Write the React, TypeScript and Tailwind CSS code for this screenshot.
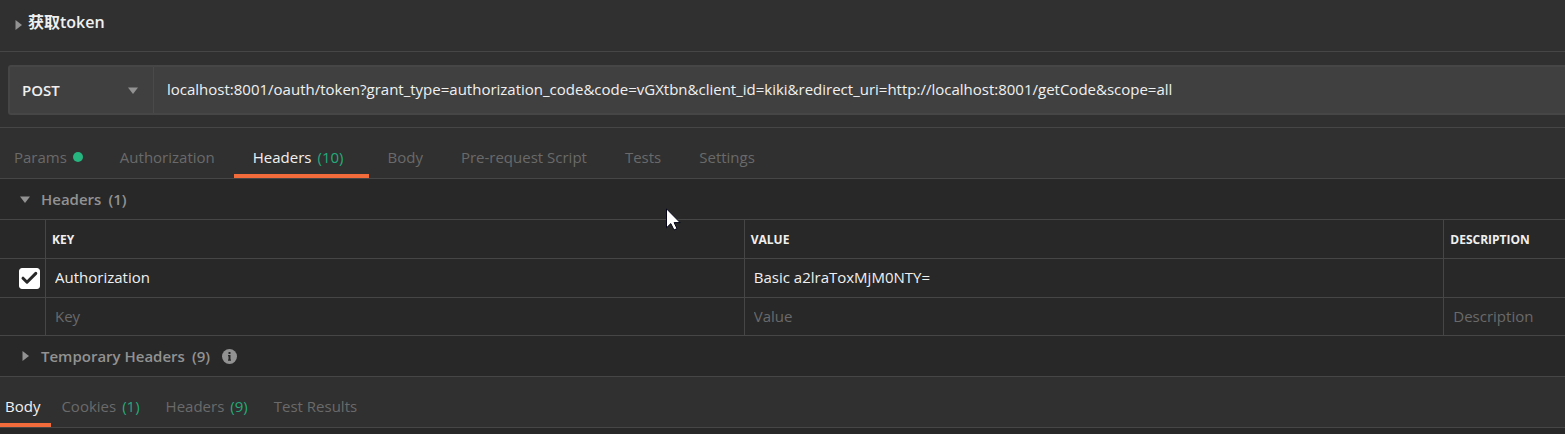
import React from "react";

type Tab = { label: string; count?: number; dot?: boolean };

const requestTabs: Tab[] = [
  { label: "Params", dot: true },
  { label: "Authorization" },
  { label: "Headers", count: 10 },
  { label: "Body" },
  { label: "Pre-request Script" },
  { label: "Tests" },
  { label: "Settings" },
];

const responseTabs: Tab[] = [
  { label: "Body" },
  { label: "Cookies", count: 1 },
  { label: "Headers", count: 9 },
  { label: "Test Results" },
];

function TriangleRight() {
  return (
    <svg className="h-[10px] w-[7px] shrink-0" viewBox="0 0 7 10" fill="#929292" aria-hidden="true">
      <path d="M0.5 0v10L7 5z" />
    </svg>
  );
}

function TriangleDown() {
  return (
    <svg className="h-[7px] w-[10px] shrink-0" viewBox="0 0 10 7" fill="#929292" aria-hidden="true">
      <path d="M0 0.5h10L5 7z" />
    </svg>
  );
}

function TabBar({
  tabs,
  initial,
  name,
  tabClass,
}: {
  tabs: Tab[];
  initial: number;
  name: string;
  tabClass: string;
}) {
  const [active, setActive] = React.useState(initial);
  return (
    <div role="tablist" aria-label={name} className="flex h-[51px] border-b border-[#464646] bg-[#303030]">
      {tabs.map((tab, i) => (
        <button
          key={tab.label}
          type="button"
          role="tab"
          aria-selected={i === active}
          onClick={() => setActive(i)}
          className={`flex items-center border-b-4 pt-3 whitespace-nowrap ${tabClass} ${
            i === active ? "border-[#f26b3a] text-[#f0f0f0]" : "border-transparent text-[#6a6a6a]"
          }`}
        >
          {tab.label}
          {tab.dot && <span className="ml-[6px] size-[10px] rounded-full bg-[#26b47f]" />}
          {tab.count !== undefined && <span className="mx-[6px] text-[#26a97a]">({tab.count})</span>}
        </button>
      ))}
    </div>
  );
}

function Section({ title, count, open, info }: { title: string; count: number; open: boolean; info?: boolean }) {
  return (
    <div className="flex h-[41px] items-center border-b border-[#464646] pl-5">
      <button type="button" aria-expanded={open} className="flex items-center font-semibold text-[#929292]">
        <span className="flex w-[21px] items-center">
          {open ? (
            <TriangleDown />
          ) : (
            <span className="flex pl-[2px]">
              <TriangleRight />
            </span>
          )}
        </span>
        {title}
        <span className="ml-[7px]">({count})</span>
      </button>
      {info && (
        <svg className="mt-px ml-3 size-[15px]" viewBox="0 0 15 15" role="img" aria-label="Information">
          <circle cx="7.5" cy="7.5" r="7.5" fill="#929292" />
          <path d="M6.5 3h2v2h-2zM6 6h2.5v4.5H9v1.2H6v-1.2h.5V7.2H6z" fill="#282828" />
        </svg>
      )}
    </div>
  );
}

const headCell =
  "border-r border-b border-[#464646] pt-[2px] pl-[6px] text-left text-xs font-bold text-[#f0f0f0] last:border-r-0";
const bodyCell = "border-r border-b border-[#464646] pl-[9px] last:border-r-0";
const field = "block w-full bg-transparent pb-[2px] text-[#f0f0f0] outline-none placeholder:text-[#6a6a6a]";

export default function App() {
  return (
    <main className="min-h-screen overflow-hidden bg-[#282828] font-['Open_Sans','Noto_Sans_CJK_SC',sans-serif] text-[15px] leading-5">
      <header className="flex h-[52px] items-center border-b border-[#464646] bg-[#303030] pb-[7px] pl-[15px]">
        <button type="button" className="flex items-center gap-[6px] text-base leading-5 font-semibold text-[#f0f0f0]">
          <span className="pt-[5px]">
            <TriangleRight />
          </span>
          <h1>获取token</h1>
        </button>
      </header>

      <form className="flex h-[76px] border-b border-[#464646] bg-[#303030] pt-[13px] pb-3 pl-2">
        <div className="flex min-w-0 grow rounded-l-[3px] border-y-2 border-l-2 border-[#464646] bg-[#404040]">
          <div className="grid w-[144px] shrink-0 items-center border-r border-[#4a4a4a]">
            <select
              aria-label="Request method"
              defaultValue="POST"
              className="col-start-1 row-start-1 h-full w-full appearance-none bg-transparent pl-3 font-semibold text-[#f0f0f0] outline-none"
            >
              <option>GET</option>
              <option>POST</option>
              <option>PUT</option>
              <option>DELETE</option>
            </select>
            <span className="pointer-events-none col-start-1 row-start-1 mr-[15px] justify-self-end">
              <TriangleDown />
            </span>
          </div>
          <input
            aria-label="Request URL"
            defaultValue="localhost:8001/oauth/token?grant_type=authorization_code&code=vGXtbn&client_id=kiki&redirect_uri=http://localhost:8001/getCode&scope=all"
            className="min-w-0 grow bg-transparent pb-[2px] pl-[13px] text-[#f0f0f0] outline-none"
          />
        </div>
      </form>

      <TabBar tabs={requestTabs} initial={2} name="Request" tabClass="px-[19px] first:pl-[14px] first:pr-[18px]" />

      <Section title="Headers" count={1} open />

      <table className="w-full table-fixed border-separate border-spacing-0">
        <colgroup>
          <col className="w-[46px]" />
          <col className="w-[44.65%]" />
          <col className="w-[44.7%]" />
          <col />
        </colgroup>
        <thead>
          <tr className="h-[39px]">
            <td className="border-r border-b border-[#464646]" />
            <th className={headCell}>KEY</th>
            <th className={headCell}>VALUE</th>
            <th className={headCell}>DESCRIPTION</th>
          </tr>
        </thead>
        <tbody>
          <tr className="h-[39px]">
            <td className="border-r border-b border-[#464646] pl-[19px]">
              <span className="grid size-[21px]">
                <input
                  type="checkbox"
                  defaultChecked
                  aria-label="Enable Authorization header"
                  className="peer col-start-1 row-start-1 size-[21px] appearance-none rounded-[3px] border border-white checked:bg-white"
                />
                <svg
                  className="pointer-events-none invisible col-start-1 row-start-1 size-[21px] peer-checked:visible"
                  viewBox="0 0 21 21"
                  fill="none"
                  stroke="#282828"
                  strokeWidth="3"
                  aria-hidden="true"
                >
                  <path d="M4 10.2l4 4L16.8 5.4" strokeLinejoin="round" strokeLinecap="round" />
                </svg>
              </span>
            </td>
            <td className={bodyCell}>
              <input aria-label="Header key" defaultValue="Authorization" className={field} />
            </td>
            <td className={bodyCell}>
              <input aria-label="Header value" defaultValue="Basic a2lraToxMjM0NTY=" className={field} />
            </td>
            <td className={bodyCell}>
              <input aria-label="Header description" className={field} />
            </td>
          </tr>
          <tr className="h-[38px]">
            <td className="border-r border-b border-[#464646]" />
            <td className={bodyCell}>
              <input aria-label="New header key" placeholder="Key" className={field} />
            </td>
            <td className={bodyCell}>
              <input aria-label="New header value" placeholder="Value" className={field} />
            </td>
            <td className={bodyCell}>
              <input aria-label="New header description" placeholder="Description" className={field} />
            </td>
          </tr>
        </tbody>
      </table>

      <Section title="Temporary Headers" count={9} open={false} info />

      <TabBar tabs={responseTabs} initial={0} name="Response" tabClass="px-[10px] first:pl-[5px] first:pr-[11px]" />

      <svg
        className="pointer-events-none absolute top-[208px] left-[666px] h-[23px] w-[15px]"
        viewBox="0 0 15 23"
        aria-hidden="true"
      >
        <path
          d="M0.5 0.8v19l4.3-4.2 3.2 6.4 3-1.4-2.9-6h6z"
          fill="#fff"
          stroke="#05051a"
          strokeWidth="1"
        />
      </svg>
    </main>
  );
}
